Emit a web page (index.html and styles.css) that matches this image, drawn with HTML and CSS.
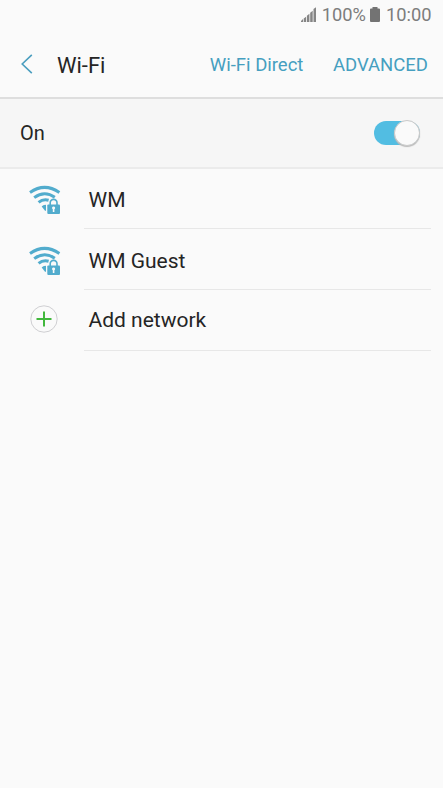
FILE: index.html
```html
<!DOCTYPE html>
<html lang="en">
<head>
<meta charset="utf-8">
<title>Wi-Fi</title>
<link rel="stylesheet" href="styles.css">
</head>
<body>
<svg class="defs" aria-hidden="true">
  <symbol id="wifi-lock" viewBox="0 0 32 30">
    <g fill="none" stroke="currentColor">
      <path stroke-width="3" d="M1 7.400Q15.500-2.600 30.400 7.400"/>
      <path stroke-width="3" d="M5.200 12.600Q15.500 5 25.800 12.300"/>
      <path stroke-width="3" d="M9.600 17.400Q14 13.600 19.600 15.200"/>
    </g>
    <path fill="currentColor" d="M12.700 21.500Q14.200 19.600 17 19.900V25.800H16Z"/>
    <path fill="none" stroke="currentColor" stroke-width="1.600" d="M21.200 20V17.800a3.400 3.400 0 0 1 6.800 0V20"/>
    <rect x="18.300" y="19.400" width="12.700" height="9.600" rx="1" fill="currentColor"/>
    <path fill="#fafafa" d="M24.600 21.500a1.500 1.500 0 0 1 .8 2.800V27h-1.600v-2.700a1.500 1.500 0 0 1 .8-2.800Z"/>
  </symbol>
</svg>
<div class="status">
  <svg class="signal" viewBox="0 0 16 16"><path d="M0 15v-1l2-2v3zM2.700 15v-3.500l2.400-1.800V15zM5.900 15V8.800l2.500-2V15zM9.200 15V5.700l2.500-2V15zM12.500 15V2l2.500-1.800V15z"/></svg>
  <span class="percent">100%</span>
  <svg class="battery" viewBox="0 0 10 15"><path d="M2.500 0h5v1.500H9a1 1 0 0 1 1 1V14a1 1 0 0 1-1 1H1a1 1 0 0 1-1-1V2.500a1 1 0 0 1 1-1h1.500z"/></svg>
  <span class="time">10:00</span>
</div>
<header class="bar">
  <svg class="back" viewBox="0 0 12 20"><path d="M10.800 .8L1.200 10l9.600 9.200"/></svg>
  <h1>Wi-Fi</h1>
  <span class="action direct">Wi-Fi Direct</span>
  <span class="action advanced">ADVANCED</span>
</header>
<section class="power">
  <span class="on">On</span>
  <div class="toggle"><div class="knob"></div></div>
</section>
<main>
  <div class="row"><div class="icon"><svg class="wifi"><use href="#wifi-lock"/></svg></div><div class="name"><span>WM</span></div></div>
  <div class="row"><div class="icon"><svg class="wifi"><use href="#wifi-lock"/></svg></div><div class="name"><span>WM Guest</span></div></div>
  <div class="row add"><div class="icon"><svg class="plus" viewBox="0 0 28 28"><circle cx="14" cy="14" r="13.200"/><path d="M6.500 14h15M14 6.500v15"/></svg></div><div class="name"><span>Add network</span></div></div>
</main>
</body>
</html>
```
FILE: styles.css
```css
* { box-sizing: border-box; }
body { margin: 0; height: 788px; overflow: hidden; background: #fafafa; color: #252525; font-family: Roboto, sans-serif; }
svg { display: block; flex: none; }
span, h1 { white-space: nowrap; }
.defs { width: 0; height: 0; position: absolute; }
.status { height: 30px; display: flex; align-items: center; justify-content: flex-end; padding-right: 11.5px; color: #7d7d7d; font-size: 18.3px; }
.status span { line-height: 22px; margin-bottom: 1px; }
.signal { width: 16px; height: 16px; fill: #858585; margin-right: 5px; }
.battery { width: 10px; height: 15px; fill: #737373; margin: 0 6px 1px 4px; }
.bar { height: 69px; display: flex; align-items: center; padding: 0 15px 0 21px; border-bottom: 2px solid #dedede; }
.back { width: 12px; height: 20px; fill: none; stroke: #4b9ebf; stroke-width: 1.6; }
h1 { margin: 4px 0 0 24px; font-size: 22px; line-height: 26px; font-weight: 400; }
.action { margin-top: 2px; color: #459fc0; font-size: 18.5px; line-height: 24px; }
.direct { margin-left: auto; }
.advanced { margin-left: 29.5px; }
.power { height: 70px; display: flex; align-items: center; justify-content: space-between; padding: 0 23px 0 20px; background: #f6f6f6; border-bottom: 2px solid #ebebeb; font-size: 20px; }
.toggle { width: 46px; height: 24px; border-radius: 12px; background: #52bde2; display: flex; align-items: center; justify-content: flex-end; }
.knob { width: 26px; height: 26px; flex: none; border-radius: 50%; background: #fafafa; border: 1px solid #c9c9c9; box-shadow: 0 1px 1px #bbb; }
.row { height: 61px; display: flex; }
.row:first-child { height: 60px; }
.icon { width: 84px; padding: 16px 0 0 29px; color: #52accd; }
.row:nth-child(2) .icon { padding-top: 17px; }
.wifi { width: 32px; height: 30px; }
.plus { width: 28px; height: 28px; fill: none; stroke: #cfcfd2; stroke-width: 1; }
.plus path { stroke: #42b83d; stroke-width: 2; }
.add .icon { padding: 15px 0 0 30px; }
.name { flex: 1; margin-right: 12px; padding: 2px 0 0 4.5px; border-bottom: 1px solid #e7e7e7; display: flex; align-items: center; font-size: 21px; }
.row:nth-child(2) .name { padding-top: 3px; }
.add .name { padding-top: 0; }
```
